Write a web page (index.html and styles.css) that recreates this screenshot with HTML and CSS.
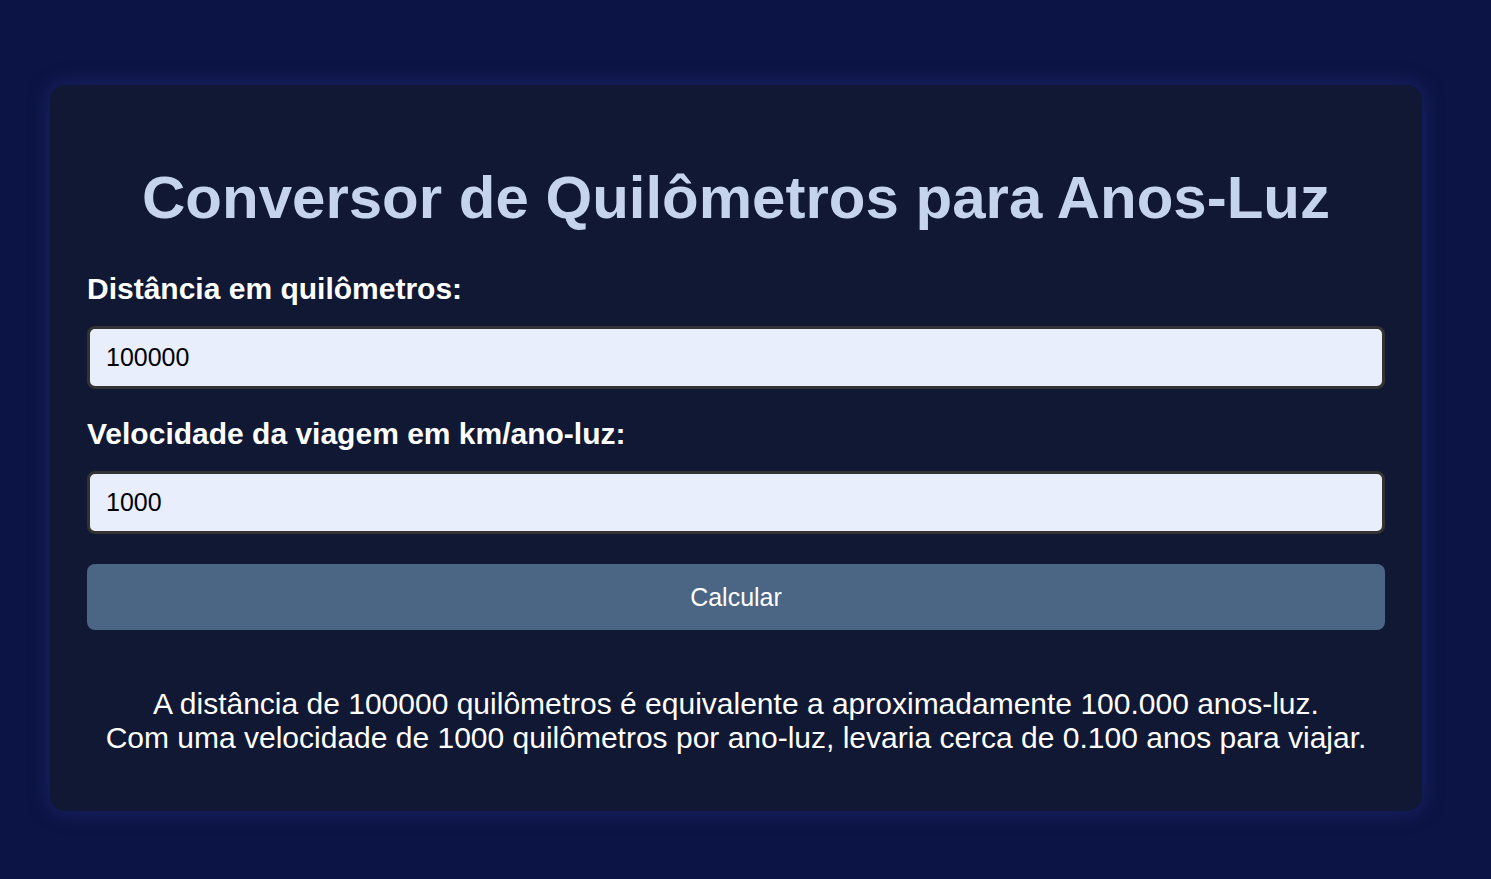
FILE: index.html
```html
<!DOCTYPE html>
<html lang="pt">
<head>
<meta charset="utf-8">
<title>Conversor de Quilômetros para Anos-Luz</title>
<link rel="stylesheet" href="styles.css">
</head>
<body>
<main class="card">
  <h1 class="title">Conversor de Quilômetros para Anos-Luz</h1>
  <label class="label" for="km">Distância em quilômetros:</label>
  <input class="field" id="km" type="text" value="100000">
  <label class="label" for="vel">Velocidade da viagem em km/ano-luz:</label>
  <input class="field" id="vel" type="text" value="1000">
  <button class="btn" type="button">Calcular</button>
  <div class="result">
    <p>A distância de 100000 quilômetros é equivalente a aproximadamente 100.000 anos-luz.</p>
    <p>Com uma velocidade de 1000 quilômetros por ano-luz, levaria cerca de 0.100 anos para viajar.</p>
  </div>
</main>
</body>
</html>
```

FILE: styles.css
```css
html, body {
  margin: 0;
  padding: 0;
}
body {
  background: #0c1445;
  font-family: "Liberation Sans", Arial, sans-serif;
  min-height: 879px;
  padding-top: 85px;
  padding-left: 50px;
  box-sizing: border-box;
}
.card {
  width: 1372px;
  box-sizing: border-box;
  background: #111833;
  border-radius: 15px;
  box-shadow: 0 0 20px rgba(40, 50, 130, 0.6);
  padding: 78px 37px 56px 37px;
  display: flex;
  flex-direction: column;
}
.title {
  margin: 0 0 40px 0;
  text-align: center;
  color: #c5d3ec;
  font-size: 60px;
  font-weight: bold;
  line-height: 70px;
}
.label {
  color: #ffffff;
  font-size: 30px;
  font-weight: bold;
  line-height: 32px;
  margin-bottom: 21px;
}
.field {
  height: 63px;
  box-sizing: border-box;
  border: 3px solid #333;
  border-radius: 8px;
  background: #e8eefc;
  font-family: "Liberation Sans", Arial, sans-serif;
  font-size: 25px;
  color: #000;
  padding: 0 16px;
  margin: 0 0 29px 0;
}
.btn {
  height: 66px;
  border: none;
  border-radius: 8px;
  background: #4b6584;
  color: #fff;
  font-family: "Liberation Sans", Arial, sans-serif;
  font-size: 25px;
  margin-top: 1px;
}
.result {
  margin-top: 57px;
  text-align: center;
  color: #fff;
  font-size: 30px;
  line-height: 34px;
}
.result p {
  margin: 0;
}
```
